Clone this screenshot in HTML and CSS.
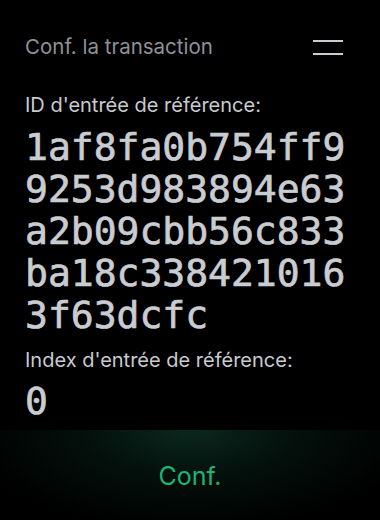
FILE: index.html
```html
<!DOCTYPE html>
<html lang="fr">
<head>
<meta charset="utf-8">
<link rel="stylesheet" href="styles.css">
</head>
<body>
<div class="screen">
  <header class="header">
    <span class="title">Conf. la transaction</span>
    <button class="menu" aria-label="menu">
      <svg width="30" height="15" viewBox="0 0 30 15"><rect x="0" y="0" width="30" height="2" fill="#c9ccd1"/><rect x="0" y="13" width="30" height="2" fill="#c9ccd1"/></svg>
    </button>
  </header>
  <main class="content">
    <div class="label">ID d'entrée de référence:</div>
    <div class="value hex">1af8fa0b754ff9<br>9253d983894e63<br>a2b09cbb56c833<br>ba18c338421016<br>3f63dcfc</div>
    <div class="label label-2">Index d'entrée de référence:</div>
    <div class="value idx">0</div>
  </main>
  <div class="action">
    <span class="confirm">Conf.</span>
  </div>
</div>
</body>
</html>
```
FILE: styles.css
```css
html, body {
  margin: 0;
  padding: 0;
  background: #000;
}
.screen {
  width: 380px;
  height: 520px;
  display: flex;
  flex-direction: column;
  font-family: Inter, "Noto Sans", sans-serif;
  overflow: hidden;
}
.header {
  display: flex;
  align-items: center;
  justify-content: space-between;
  padding: 35px 37px 0 25px;
  height: 24px;
}
.title {
  font-size: 20.5px;
  line-height: 24px;
  color: #8f9297;
}
.menu {
  background: none;
  border: 0;
  padding: 0;
  display: flex;
  margin-top: 1px;
}
.content {
  padding: 34px 25px 0 25px;
  flex: 1;
}
.label {
  font-size: 20px;
  line-height: 24px;
  color: #c8cbd0;
}
.label-2 {
  margin-top: 12px;
}
.value {
  font-family: "DejaVu Sans Mono", "Liberation Mono", monospace;
  font-size: 38px;
  line-height: 42px;
  color: #c9ccd1;
  -webkit-text-stroke: 0.7px #c9ccd1;
}
.hex {
  margin-top: 9px;
}
.idx {
  margin-top: 8px;
}
.action {
  height: 90px;
  display: flex;
  align-items: center;
  justify-content: center;
  background: radial-gradient(ellipse 60% 110% at 50% 0%, rgba(14, 50, 38, 0.8) 0%, rgba(8, 30, 22, 0.55) 45%, rgba(0, 0, 0, 0) 100%);
}
.confirm {
  font-size: 25px;
  color: #1bb576;
  line-height: 28px;
  margin-top: 1px;
}
```
